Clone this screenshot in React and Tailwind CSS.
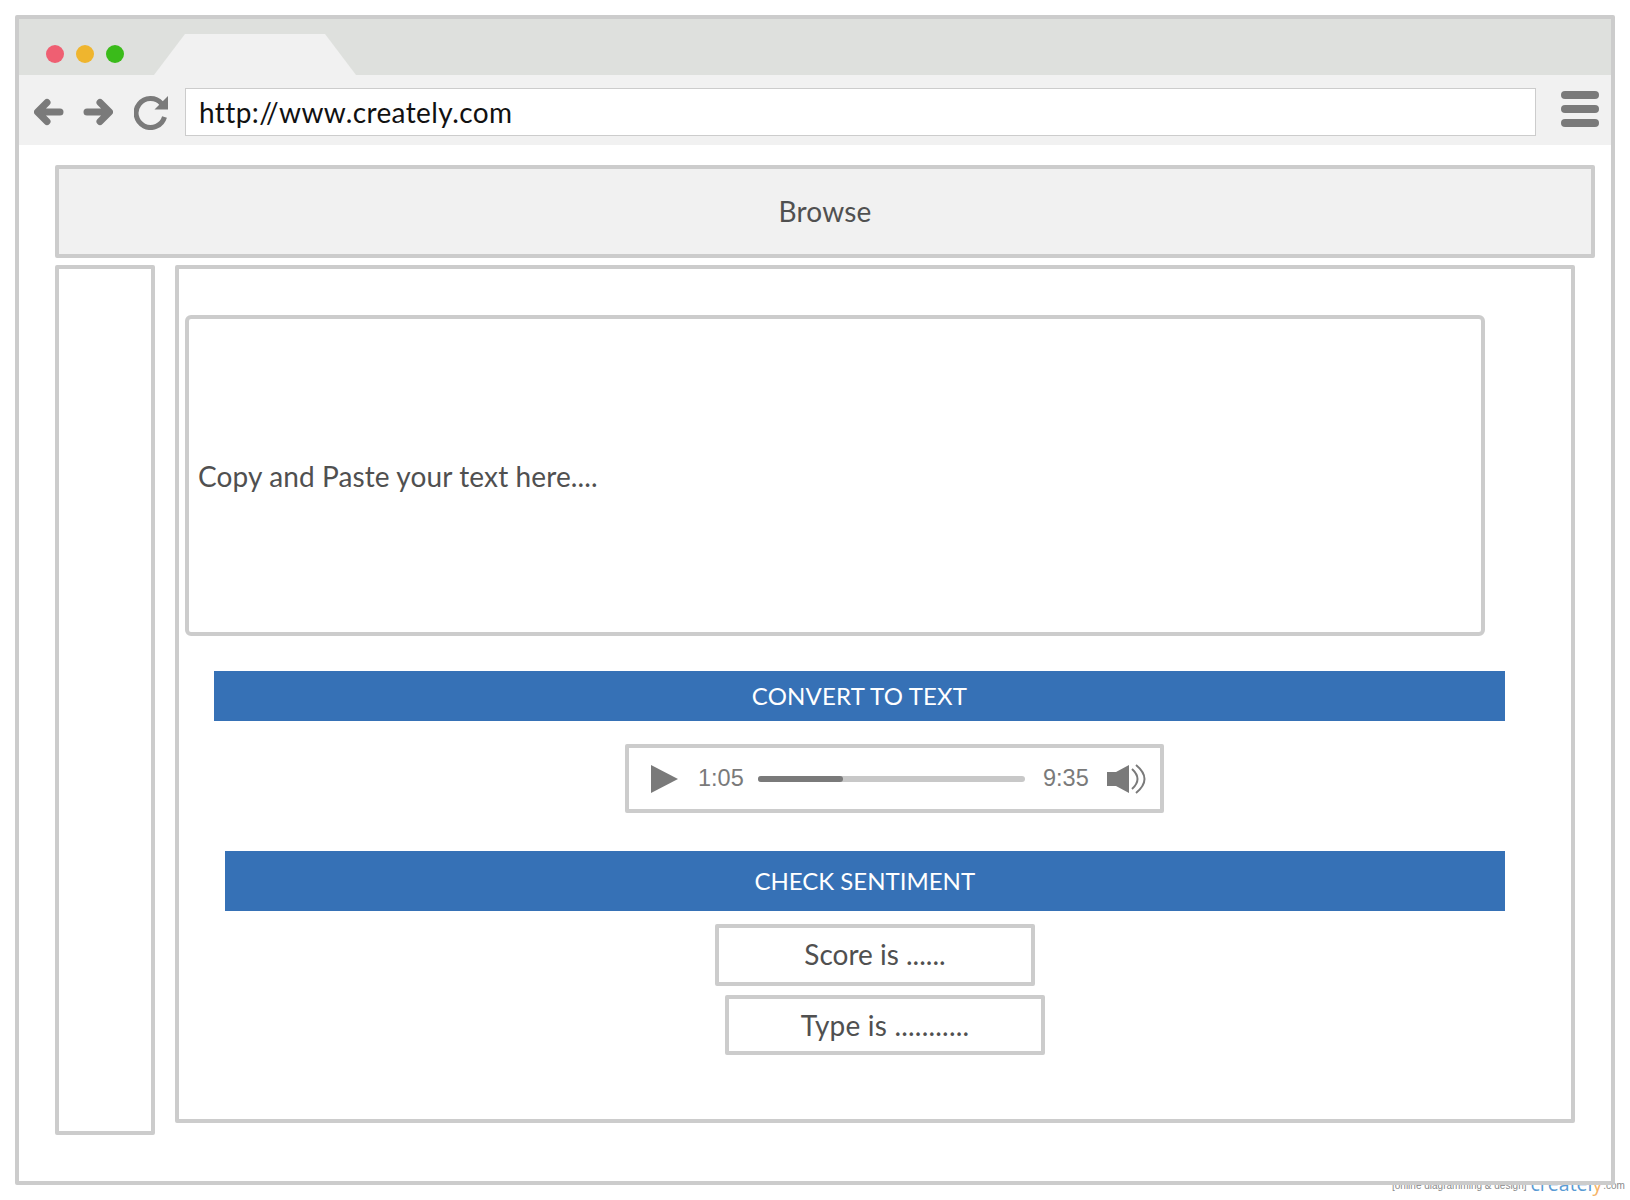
// browser wireframe mock
function ArrowIcon({ flip }) {
  return (
    <svg width="30" height="28" viewBox="0 0 30 28" className={flip ? 'rotate-180' : ''}>
      <path d="M26 14H5M13 4.5L3.5 14L13 23.5" fill="none" stroke="#7a7a7a" strokeWidth="7" strokeLinecap="round" strokeLinejoin="round" />
    </svg>
  );
}

function ReloadIcon() {
  return (
    <svg width="36" height="36" viewBox="0 0 36 36">
      <path d="M27.5 9.5A14.5 14.5 0 1 0 30.5 23" fill="none" stroke="#7a7a7a" strokeWidth="5" />
      <path d="M34 2V15.5H20.5Z" fill="#7a7a7a" />
    </svg>
  );
}

function MenuIcon() {
  return (
    <div className="flex w-[38px] flex-col gap-[6px]">
      <div className="h-[8px] rounded-[4px] bg-[#7a7a7a]" />
      <div className="h-[8px] rounded-[4px] bg-[#7a7a7a]" />
      <div className="h-[8px] rounded-[4px] bg-[#7a7a7a]" />
    </div>
  );
}

function BlueBar({ className, children }) {
  return (
    <div className={`flex items-center justify-center bg-[#3671b6] text-[24px] text-white ${className}`}>
      {children}
    </div>
  );
}

function ResultBox({ className, children }) {
  return (
    <div className={`flex items-center justify-center rounded-[2px] border-4 border-[#cccccc] text-[28px] text-[#505050] ${className}`}>
      {children}
    </div>
  );
}

function AudioPlayer() {
  return (
    <div className="ml-[446px] mt-[23px] flex h-[69px] w-[539px] items-center rounded-[2px] border-4 border-[#cccccc] pl-[22px] font-['Liberation_Sans',sans-serif] text-[23.5px] text-[#7a7a7a]">
      <svg width="27" height="28" viewBox="0 0 27 28" className="shrink-0">
        <path d="M0 0L27 14L0 28Z" fill="#7a7a7a" />
      </svg>
      <span className="ml-[20px] mt-[1px] w-[45px]">1:05</span>
      <div className="ml-[15px] h-[6px] w-[267px] rounded-full bg-[#c8c8c8]">
        <div className="h-full w-[85px] rounded-full bg-[#7a7a7a]" />
      </div>
      <span className="ml-[18px] mt-[1px] w-[46px]">9:35</span>
      <svg width="40" height="30" viewBox="0 0 40 30" className="ml-[18px] shrink-0">
        <path d="M0 8H9L22 1V29L9 22H0Z" fill="#7a7a7a" />
        <path d="M25 5Q36 15 25 25M29 1Q46 15 29 29" fill="none" stroke="#7a7a7a" strokeWidth="2" />
      </svg>
    </div>
  );
}

export default function App() {
  return (
    <div className="relative h-[1200px] w-[1630px] overflow-hidden bg-white px-[15px] pt-[15px] font-['Lato',sans-serif]">
      {/* watermark sits under the frame and gets cut by it */}
      <div className="absolute left-[1392px] top-[1168px] flex items-baseline whitespace-nowrap font-['Liberation_Sans',sans-serif]">
        <span className="text-[10px] text-[#8a8a8a]">[online diagramming &amp; design]</span>
        <span className="ml-[4px] translate-y-[2px] font-['Open_Sans',sans-serif] text-[19.5px] leading-[28px] text-[#5a9bd4]">
          createl<span className="text-[#f6b366]">y</span>
        </span>
        <span className="ml-[1px] text-[10px] text-[#8a8a8a]">.com</span>
      </div>

      <div className="relative h-[1170px] w-[1600px] rounded-[2px] border-4 border-[#cccccc] bg-white">
        <div className="flex h-[56px] bg-[#dee0dd] pl-[27px]">
          <div className="mb-[12px] flex items-end gap-[12px] self-end">
            <div className="h-[18px] w-[18px] rounded-full bg-[#ef5f72]" />
            <div className="h-[18px] w-[18px] rounded-full bg-[#efb52e]" />
            <div className="h-[18px] w-[18px] rounded-full bg-[#3abb1a]" />
          </div>
          <svg width="202" height="41" viewBox="0 0 202 41" className="ml-[30px] self-end">
            <path d="M0 41L31 0H171L202 41Z" fill="#f1f1f1" />
          </svg>
        </div>

        <div className="flex h-[70px] items-center bg-[#f1f1f1] pl-[15px]">
          <div className="mt-[4px]">
            <ArrowIcon />
          </div>
          <div className="ml-[19px] mt-[4px]">
            <ArrowIcon flip />
          </div>
          <div className="ml-[21px] mt-[4px]">
            <ReloadIcon />
          </div>
          <div className="ml-[15px] mt-[4px] flex h-[48px] w-[1351px] items-center border border-[#cccccc] bg-white pl-[13px] text-[28px] tracking-[0.4px] text-[#111111]">
            http://www.creately.com
          </div>
          <div className="ml-[25px] mb-[2px]">
            <MenuIcon />
          </div>
        </div>

        <div className="pl-[36px] pr-[16px] pt-[20px]">
          <div className="flex h-[93px] items-center justify-center rounded-[2px] border-4 border-[#cccccc] bg-[#f1f1f1] pb-[2px] text-[28px] tracking-[0.2px] text-[#505050]">
            Browse
          </div>

          <div className="mt-[7px] flex items-start gap-[20px]">
            <div className="h-[870px] w-[100px] rounded-[2px] border-4 border-[#cccccc]" />

            <div className="flex h-[858px] w-[1400px] flex-col rounded-[2px] border-4 border-[#cccccc]">
              <div className="ml-[6px] mt-[46px] flex h-[321px] w-[1300px] items-center rounded-[6px] border-4 border-[#cccccc] pl-[9px] text-[28px] tracking-[0.12px] text-[#505050]">
                Copy and Paste your text here....
              </div>
              <BlueBar className="ml-[35px] mt-[35px] h-[50px] w-[1291px] tracking-[0.2px]">CONVERT TO TEXT</BlueBar>
              <AudioPlayer />
              <BlueBar className="ml-[45.5px] mt-[38px] h-[60px] w-[1280.5px]">CHECK SENTIMENT</BlueBar>
              <ResultBox className="ml-[536px] mt-[13px] h-[62px] w-[320px] pb-[2px]">Score is ......</ResultBox>
              <ResultBox className="ml-[546px] mt-[9px] h-[60px] w-[320px] tracking-[0.2px]">Type is ...........</ResultBox>
            </div>
          </div>
        </div>
      </div>
    </div>
  );
}
